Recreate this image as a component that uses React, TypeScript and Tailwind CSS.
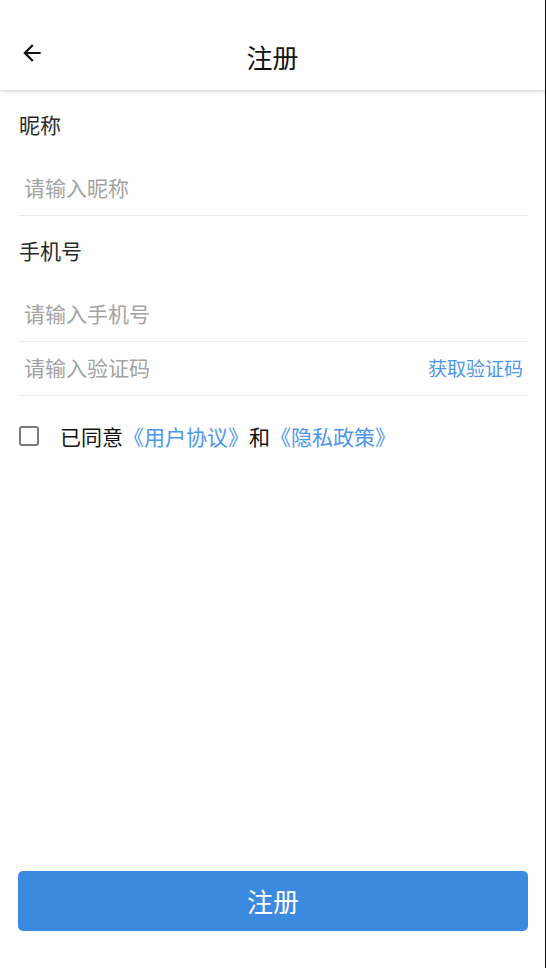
import { useState } from 'react';

const font = { fontFamily: '"Noto Sans CJK SC", "Noto Sans", sans-serif' };

function BackArrow() {
  return (
    <svg width="26" height="26" viewBox="0 0 24 24" fill="#111">
      <path d="M20 11H7.83l5.59-5.59L12 4l-8 8 8 8 1.41-1.41L7.83 13H20v-2z" />
    </svg>
  );
}

function Field({ placeholder, action }: { placeholder: string; action?: string }) {
  return (
    <div className="flex h-[54px] items-center justify-between border-b border-[#ececec] pb-[3px] pl-[6px] pr-[5px]">
      <span className="text-[21px] leading-none text-[#a3a3a3]">{placeholder}</span>
      {action && <span className="text-[19px] leading-none text-[#4c96ec]">{action}</span>}
    </div>
  );
}

function Label({ text }: { text: string }) {
  return (
    <div className="flex h-[72px] items-center pb-[3px] pl-px text-[21px] leading-none text-[#2a2a2a]">{text}</div>
  );
}

export default function App() {
  const [agreed, setAgreed] = useState(false);

  return (
    <div className="flex min-h-screen w-full flex-col border-r border-black bg-white" style={font}>
      <div className="relative z-10 h-[90px] bg-white pt-[25px] shadow-[0_1px_4px_rgba(0,0,0,0.22)]">
        <div className="grid h-[64px] grid-cols-[1fr_auto_1fr] items-center">
          <button className="ml-[19px] -mt-[8px] flex h-[26px] w-[26px] items-center justify-center">
            <BackArrow />
          </button>
          <div className="text-[26px] leading-none text-[#111]">注册</div>
          <div />
        </div>
      </div>

      <div className="flex flex-1 flex-col pl-[18px] pr-[17px]">
        <Label text="昵称" />
        <Field placeholder="请输入昵称" />
        <Label text="手机号" />
        <Field placeholder="请输入手机号" />
        <Field placeholder="请输入验证码" action="获取验证码" />

        <div className="flex h-[82px] items-center pb-[2px] pl-px">
          <button
            onClick={() => setAgreed(!agreed)}
            className="flex h-[20px] w-[20px] items-center justify-center rounded-[3px] border-2 border-[#7a7a7a] bg-white"
          >
            {agreed && <span className="h-[8px] w-[8px] bg-[#3c8ae0]" />}
          </button>
          <div className="ml-[21px] text-[21px] leading-none text-[#111]">
            已同意<span className="text-[#4c96ec]">《用户协议》</span>和
            <span className="text-[#4c96ec]">《隐私政策》</span>
          </div>
        </div>

        <div className="flex-1" />

        <button className="mb-[37px] flex h-[60px] w-full items-center justify-center rounded-[5px] bg-[#3c8ae0] text-[26px] leading-none text-white">
          注册
        </button>
      </div>
    </div>
  );
}
